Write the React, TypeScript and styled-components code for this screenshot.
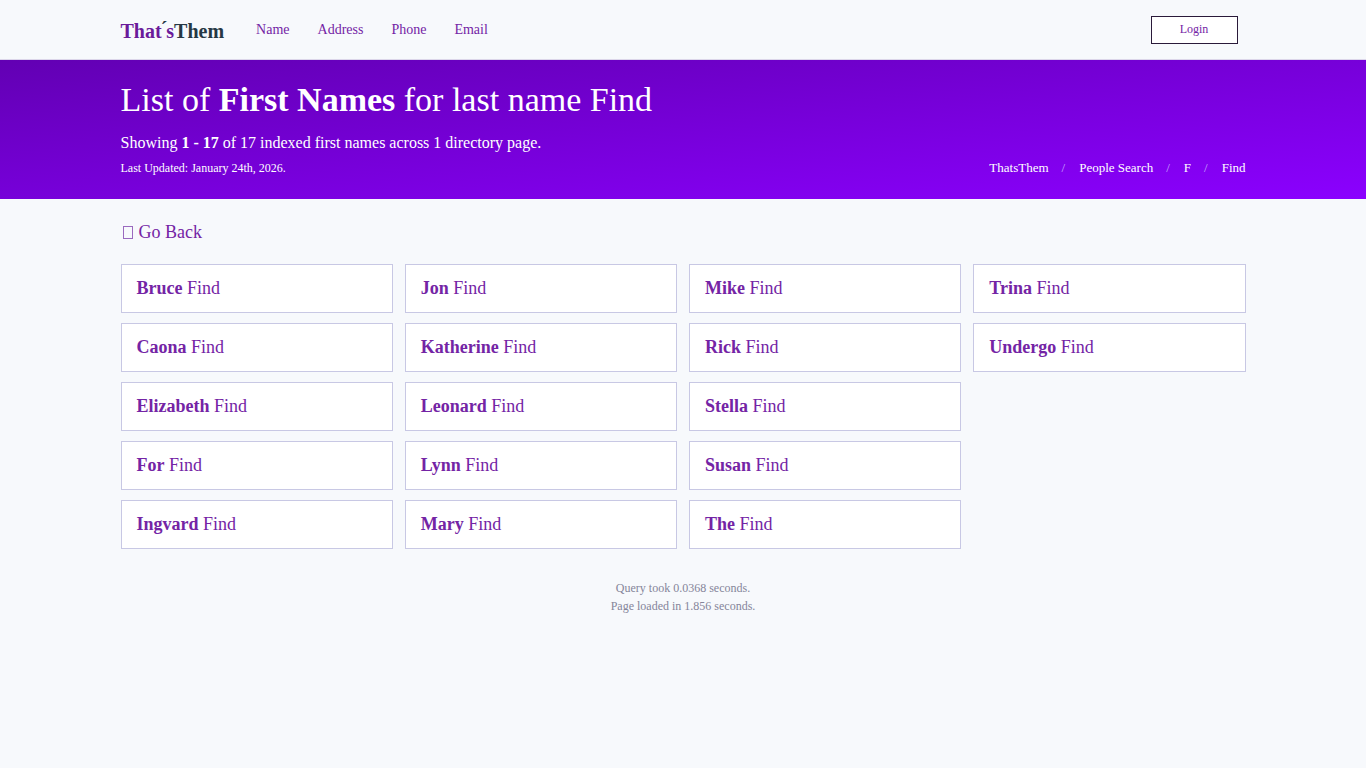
import React from "react";
import styled, { createGlobalStyle } from "styled-components";

const GlobalStyle = createGlobalStyle`
  * { box-sizing: border-box; }
  body {
    margin: 0;
    background: #f7f9fc;
    color: #7424a5;
    font-family: "Liberation Serif", "Times New Roman", serif;
    font-size: 18px;
    line-height: 27px;
  }
  a { color: inherit; text-decoration: none; }
  a:hover { text-decoration: underline; }
`;

const Container = styled.div`
  width: 100%;
  max-width: 1157px;
  margin: 0 auto;
  padding: 0 16px;
`;

const TopBar = styled.header`
  border-bottom: 1px solid #dcd6ea;
`;

const TopBarInner = styled(Container)`
  display: flex;
  align-items: center;
  min-height: 59px;
`;

const Logo = styled.a`
  padding-top: 4px;
  margin-right: 32px;
  font-size: 20px;
  font-weight: 700;
  color: #6a1b9a;
`;

const LogoDark = styled.span`
  color: #263844;
`;

const Accent = styled(LogoDark)`
  margin: 0 -1px;
  vertical-align: 2px;
  line-height: 1;
`;

const Nav = styled.nav`
  display: flex;
  flex: 1;
  gap: 28px;
  font-size: 14px;
`;

const LoginButton = styled.button`
  width: 87px;
  height: 28px;
  margin-right: 8px;
  border: 1px solid #2a1a3a;
  background: #fff;
  color: #7424a5;
  font-family: inherit;
  font-size: 12px;
  cursor: pointer;
`;

const Hero = styled.section`
  padding: 16px 0 20px;
  background: linear-gradient(to bottom right, #6200b3, #8b00ff);
  color: #fff;
`;

const Title = styled.h1`
  margin: 0;
  font-size: 34px;
  line-height: 48px;
  font-weight: 400;
`;

const Summary = styled.p`
  margin: 5px 0 0;
  font-size: 16px;
  line-height: 28px;
`;

const HeroFooter = styled.div`
  display: flex;
  flex-wrap: wrap;
  justify-content: space-between;
  font-size: 12px;
  line-height: 22px;
`;

const Crumbs = styled.ol`
  display: flex;
  margin: 0;
  padding: 0;
  list-style: none;
  font-size: 13px;

  li + li::before {
    content: "/";
    padding: 0 14px 0 13px;
    color: #c9a0ff;
  }
`;

const BackLink = styled.a`
  display: inline-flex;
  align-items: center;
  gap: 6px;
  margin: 20px 0 18px;
  padding-left: 2px;
`;

const BackBox = styled.span`
  width: 10px;
  height: 13px;
  border: 1px solid #9a6abf;
`;

const NameGrid = styled.ul`
  display: grid;
  grid-template-columns: repeat(4, 1fr);
  grid-template-rows: repeat(5, auto);
  grid-auto-flow: column;
  gap: 10px 12px;
  margin: 0;
  padding: 0;
  list-style: none;
`;

const NameCard = styled.a`
  display: block;
  padding: 10px 15px;
  border: 1px solid #c8c8e4;
  background: #fff;
`;

const Timing = styled.footer`
  margin-top: 30px;
  color: #85859a;
  font-size: 12px;
  line-height: 18px;
  text-align: center;
`;

const names = [
  "Bruce", "Caona", "Elizabeth", "For", "Ingvard",
  "Jon", "Katherine", "Leonard", "Lynn", "Mary",
  "Mike", "Rick", "Stella", "Susan", "The",
  "Trina", "Undergo",
];

export default function App() {
  return (
    <>
      <GlobalStyle />
      <TopBar>
        <TopBarInner>
          <Logo href="#">That<Accent>´</Accent>s<LogoDark>Them</LogoDark></Logo>
          <Nav>
            {["Name", "Address", "Phone", "Email"].map((item) => (
              <a key={item} href="#">{item}</a>
            ))}
          </Nav>
          <LoginButton type="button">Login</LoginButton>
        </TopBarInner>
      </TopBar>
      <Hero>
        <Container>
          <Title>List of <b>First Names</b> for last name Find</Title>
          <Summary>Showing <b>1 - 17</b> of 17 indexed first names across 1 directory page.</Summary>
          <HeroFooter>
            <span>Last Updated: January 24th, 2026.</span>
            <Crumbs>
              {["ThatsThem", "People Search", "F", "Find"].map((crumb) => (
                <li key={crumb}><a href="#">{crumb}</a></li>
              ))}
            </Crumbs>
          </HeroFooter>
        </Container>
      </Hero>
      <Container as="main">
        <BackLink href="#"><BackBox aria-hidden="true" />Go Back</BackLink>
        <NameGrid>
          {names.map((name) => (
            <li key={name}>
              <NameCard href="#"><b>{name}</b> Find</NameCard>
            </li>
          ))}
        </NameGrid>
        <Timing>
          <div>Query took 0.0368 seconds.</div>
          <div>Page loaded in 1.856 seconds.</div>
        </Timing>
      </Container>
    </>
  );
}
